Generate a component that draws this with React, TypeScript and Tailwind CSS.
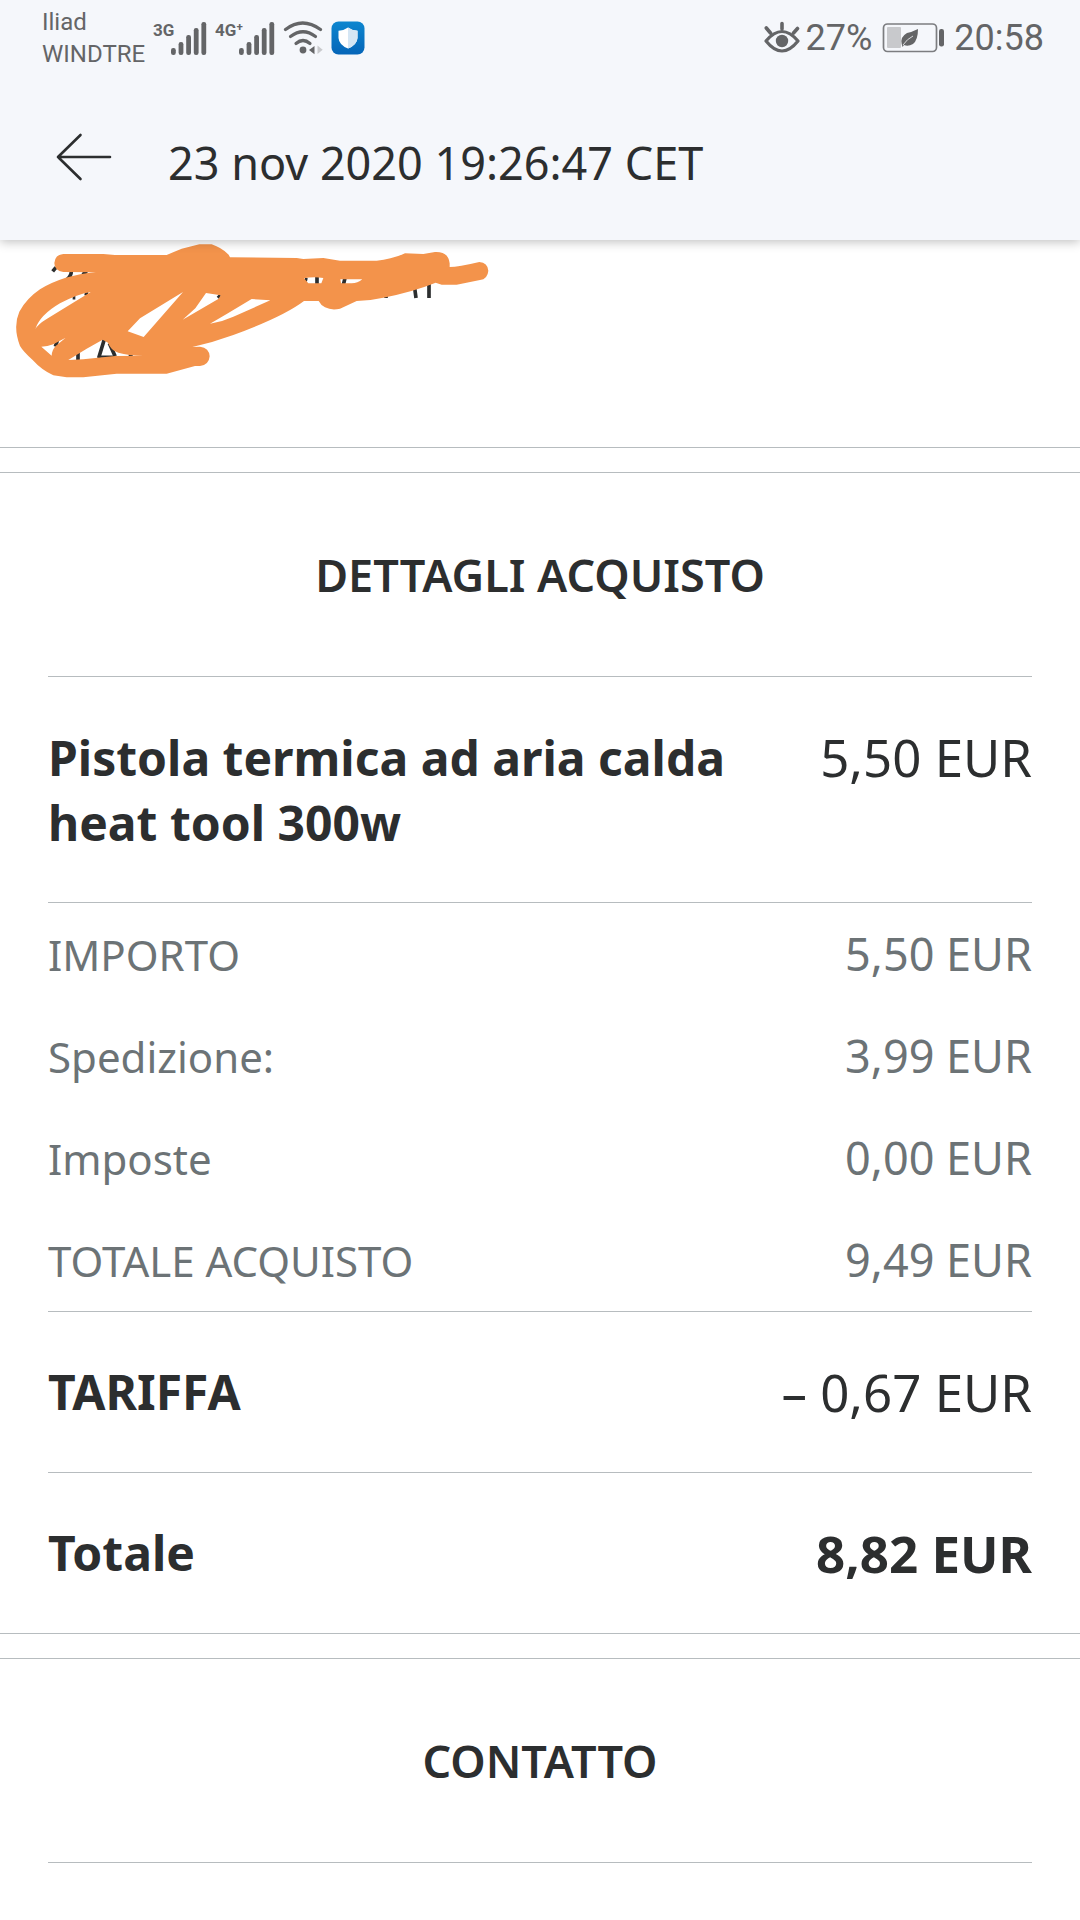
import React from "react";

type Row = { label: string; value: string };

const summary: Row[] = [
  { label: "IMPORTO", value: "5,50 EUR" },
  { label: "Spedizione:", value: "3,99 EUR" },
  { label: "Imposte", value: "0,00 EUR" },
  { label: "TOTALE ACQUISTO", value: "9,49 EUR" },
];

function Signal({ label, barsX }: { label: string; barsX: number }) {
  const tops = [45, 39, 32, 25, 19];
  return (
    <svg width={barsX + 36} height="36" viewBox={`0 17 ${barsX + 36} 36`} fill="#646567">
      <text x="0" y="33" fontSize="17" fontWeight="700" className="font-['Roboto',sans-serif]">
        {label}
      </text>
      {tops.map((top, i) => (
        <rect key={top} x={barsX + i * 7.6} y={top} width="4.8" height={52 - top} rx="2.2" />
      ))}
    </svg>
  );
}

function WifiIcon() {
  return (
    <svg width="40" height="34" viewBox="283 19 40 34" fill="none" stroke="#646567" strokeWidth="3.2" strokeLinecap="round">
      <path d="M285.500 27.500Q302.500 14.500 320.500 27.500" />
      <path d="M290.500 34.500Q303 25 315.500 34.500" />
      <path d="M296 41.500Q303 35.500 310 41.500" />
      <circle cx="303" cy="48" r="3.400" fill="#646567" stroke="none" />
      <path d="M314.500 44v8.200l-5.500-4.200z" fill="#646567" stroke="none" />
      <path d="M317.500 43.500v8.500l5.200-4.200z" fill="#c9cacd" stroke="none" />
    </svg>
  );
}

function ShieldIcon() {
  return (
    <svg width="34" height="34" viewBox="0 0 34 34">
      <defs>
        <linearGradient id="tile" x1="0" y1="0" x2="0" y2="1">
          <stop offset="0" stopColor="#0d86cf" />
          <stop offset="1" stopColor="#0565b8" />
        </linearGradient>
      </defs>
      <rect x="0.500" y="0.500" width="33" height="33" rx="7" fill="url(#tile)" />
      <path d="M17 6.500Q21 9.500 26.500 9.800V17Q26 24 17 27.500Q8 24 7.500 17V9.800Q13 9.500 17 6.500Z" fill="#fff" />
      <path d="M17 6.500Q21 9.500 26.500 9.800V17Q26 24 17 27.500Z" fill="#d5e6f4" />
    </svg>
  );
}

function EyeIcon() {
  return (
    <svg width="36" height="33" viewBox="766 20 36 33" fill="none" stroke="#646567" strokeWidth="3.2" strokeLinecap="round">
      <path d="M768 40Q784 21 800 40Q784 60 768 40Z" strokeLinejoin="round" />
      <circle cx="784" cy="40" r="6.200" fill="#646567" stroke="none" />
      <path d="M784 28v-5.500M772.500 32l-4.200-5M795.500 32l4-4.500" strokeWidth="3.6" />
    </svg>
  );
}

function BatteryIcon() {
  return (
    <svg width="62" height="30" viewBox="883 22 62 30">
      <rect x="884.500" y="23" width="53" height="27.500" rx="4" fill="none" stroke="#7c7d80" strokeWidth="1.700" />
      <rect x="888" y="26" width="14" height="21" rx="1" fill="#c8c9cc" />
      <path d="M919 28Q919 39 914 43Q909 46 905 44L903.500 46L902.700 43Q901 36 908 32Q913 31 919 28Z" fill="#646567" />
      <path d="M904 44Q908 38 914 35" fill="none" stroke="#d9dadd" strokeWidth="1" />
      <rect x="940" y="28" width="5" height="17.500" rx="2.200" fill="#646567" />
    </svg>
  );
}

// Marker strokes hiding the shipping address
function Scribble() {
  return (
    <svg width="500" height="150" viewBox="0 30 1500 450" role="img" aria-label="Indirizzo nascosto">
      <g fill="none" stroke="#2c2e2f" strokeWidth="11">
        <path d="M158 124L168 112M214 124Q214 138 200 150M248 134L260 124M218 203L226 203M254 190L264 192" />
        <path d="M654 196L660 202M914 148L922 150M951 135V165M1036 140L1030 165M1158 195V204M1244 174L1248 204M1287 160V204" />
        <path d="M172 332L166 350M234 365V395M314 325L296 384M328 340L345 378M386 376L398 378" />
        <path d="M296 380H350" strokeWidth="7" />
      </g>
      <path
        fill="#f3934b"
        fillRule="evenodd"
        d="M190 72L310 72L345 75L500 75Q520 66 545 56L598 43H635Q665 53 686 74L690 82L890 84L910 87L970 84L1020 92H1130Q1175 88 1215 70L1270 72L1305 66Q1345 64 1349 100V111Q1375 111 1438 96Q1463 98 1465 122Q1463 147 1440 150L1370 164H1325L1307 158Q1240 185 1150 203Q1110 212 1070 213L1020 236Q995 242 975 232Q962 225 956 213H912Q850 260 700 315Q640 337 577 351L600 350Q628 354 629 379Q627 405 600 408H585L500 431H350L250 442H200L160 436Q125 420 98 390Q70 365 60 348Q38 290 58 245Q80 205 120 178Q190 135 288 127L190 126Q163 122 163 99Q165 74 190 72Z
        M106 297Q120 255 180 220Q230 193 272 186L190 236L140 267Q115 282 106 297Z
        M124 350Q142 350 160 343L197 323L168 347Q155 360 155 377Z
        M205 390L260 356L308 329L324 338Q333 362 355 368Q385 377 430 377L345 378L250 388Z
        M383 304L420 265L549 186L431 321Z
        M548 269L586 235L618 189L662 196L656 206Z
        M630 281L680 252L755 207L811 211L700 260Q665 276 630 281Z
        M912 145Q940 139 970 144L964 160H925Z
        M1021 148L1087 148Q1073 160 1055 160H1023Z"
      />
    </svg>
  );
}

function SectionTitle({ children }: { children: React.ReactNode }) {
  return (
    <h2 className="border-b border-[#b7bcbf] pt-[70px] pb-[69px] text-center text-[45px] leading-[64px] font-semibold">
      {children}
    </h2>
  );
}

export default function App() {
  return (
    <div className="min-h-screen bg-white font-['Noto_Sans','Open_Sans',sans-serif] text-[#2c2e2f]">
      <header className="relative bg-[#f5f7fb] shadow-[0_2px_10px_rgba(0,0,0,0.25)]">
        {/* Status bar */}
        <div className="flex h-[75px] items-center justify-between pr-9 pl-[42px] font-['Roboto',sans-serif] text-[#646567]">
          <div className="flex items-center">
            <div className="text-[24px] leading-8">
              <div>Iliad</div>
              <div>WINDTRE</div>
            </div>
            <div className="ml-2 flex items-center gap-2">
              <Signal label="3G" barsX={18} />
              <Signal label="4G⁺" barsX={24} />
              <WifiIcon />
              <ShieldIcon />
            </div>
          </div>
          <div className="flex items-center text-[36px] leading-10">
            <EyeIcon />
            <span className="ml-1.5">27%</span>
            <span className="mx-2.5">
              <BatteryIcon />
            </span>
            <span>20:58</span>
          </div>
        </div>

        <div className="flex h-[165px] items-start pt-[54px] pl-14">
          <button type="button" aria-label="Indietro" className="h-14 w-14">
            <svg width="56" height="52" viewBox="0 0 56 52" fill="none" stroke="#2c2e2f" strokeWidth="2.6" strokeLinecap="round" strokeLinejoin="round">
              <path d="M24.500 4L2 26L24.500 48M2 26H54" />
            </svg>
          </button>
          <h1 className="ml-14 text-[45px] leading-[68px]">23 nov 2020 19:26:47 CET</h1>
        </div>
      </header>

      <section className="h-[208px] border-b border-[#b7bcbf]">
        <Scribble />
      </section>

      <section className="mt-6 border-y border-[#b7bcbf] px-12">
        <SectionTitle>DETTAGLI ACQUISTO</SectionTitle>

        <div className="flex items-start justify-between gap-8 border-b border-[#b7bcbf] pt-12 pb-[47px] leading-[65px]">
          <h3 className="max-w-[700px] text-[48px] font-bold">Pistola termica ad aria calda heat tool 300w</h3>
          <span className="text-[51px] whitespace-nowrap">5,50 EUR</span>
        </div>

        <dl className="border-b border-[#b7bcbf] text-[#6c7376]">
          {summary.map((row) => (
            <div key={row.label} className="flex h-[102px] items-center justify-between">
              <dt className="text-[42px]">{row.label}</dt>
              <dd className="text-[45px]">{row.value}</dd>
            </div>
          ))}
        </dl>

        <dl className="leading-[64px]">
          <div className="flex h-[161px] items-center justify-between border-b border-[#b7bcbf]">
            <dt className="text-[48px] font-bold">TARIFFA</dt>
            <dd className="text-[51px]">– 0,67 EUR</dd>
          </div>
          <div className="flex h-[160px] items-center justify-between font-bold">
            <dt className="text-[48px]">Totale</dt>
            <dd className="text-[51px]">8,82 EUR</dd>
          </div>
        </dl>
      </section>

      <section className="mt-6 border-t border-[#b7bcbf] px-12">
        <SectionTitle>CONTATTO</SectionTitle>
      </section>
    </div>
  );
}
